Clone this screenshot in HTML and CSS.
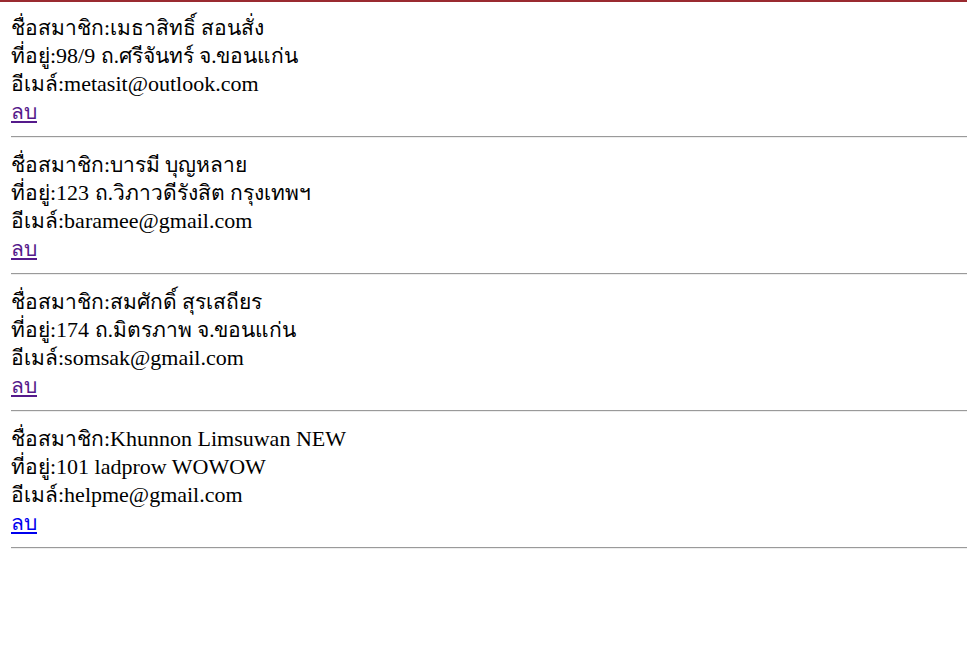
FILE: index.html
```html
<!DOCTYPE html>
<html>
<head>
<meta charset="utf-8">
<link rel="stylesheet" href="styles.css">
</head>
<body>
<div class="page">
  <div class="member">
    <div class="line"><span class="th">ชื่อสมาชิก</span>:<span class="th">เมธาสิทธิ์ สอนสั่ง</span></div>
    <div class="line"><span class="th">ที่อยู่</span>:98/9 <span class="th">ถ.ศรีจันทร์ จ.ขอนแก่น</span></div>
    <div class="line"><span class="th">อีเมล์</span>:metasit@outlook.com</div>
    <div class="line"><a class="del visited th" href="#">ลบ</a></div>
  </div>
  <hr class="sep">
  <div class="member">
    <div class="line"><span class="th">ชื่อสมาชิก</span>:<span class="th">บารมี บุญหลาย</span></div>
    <div class="line"><span class="th">ที่อยู่</span>:123 <span class="th">ถ.วิภาวดีรังสิต กรุงเทพฯ</span></div>
    <div class="line"><span class="th">อีเมล์</span>:baramee@gmail.com</div>
    <div class="line"><a class="del visited th" href="#">ลบ</a></div>
  </div>
  <hr class="sep">
  <div class="member">
    <div class="line"><span class="th">ชื่อสมาชิก</span>:<span class="th">สมศักดิ์ สุรเสถียร</span></div>
    <div class="line"><span class="th">ที่อยู่</span>:174 <span class="th">ถ.มิตรภาพ จ.ขอนแก่น</span></div>
    <div class="line"><span class="th">อีเมล์</span>:somsak@gmail.com</div>
    <div class="line"><a class="del visited th" href="#">ลบ</a></div>
  </div>
  <hr class="sep">
  <div class="member">
    <div class="line"><span class="th">ชื่อสมาชิก</span>:Khunnon Limsuwan NEW</div>
    <div class="line"><span class="th">ที่อยู่</span>:101 ladprow WOWOW</div>
    <div class="line"><span class="th">อีเมล์</span>:helpme@gmail.com</div>
    <div class="line"><a class="del th" href="#">ลบ</a></div>
  </div>
  <hr class="sep">
</div>
</body>
</html>
```
FILE: styles.css
```css
html, body {
  margin: 0;
  padding: 0;
  background: #fff;
}
.page {
  border-top: 2px solid #9a2a30;
  padding: 12px 0 0 11px;
  font-family: "Liberation Serif", "Times New Roman", serif;
  font-size: 22px;
  color: #000;
}
.member {
  display: flex;
  flex-direction: column;
}
.line {
  line-height: 28px;
  height: 28px;
  white-space: nowrap;
}
.th {
  font-size: 21px;
}
.del {
  color: #0000ee;
  text-decoration: underline;
}
.del.visited {
  color: #551a8b;
}
.sep {
  margin: 10px 0 13px 0;
  border: none;
  border-top: 1px solid #9a9a9a;
  border-bottom: 1px solid #eeeeee;
  height: 0;
}
```
